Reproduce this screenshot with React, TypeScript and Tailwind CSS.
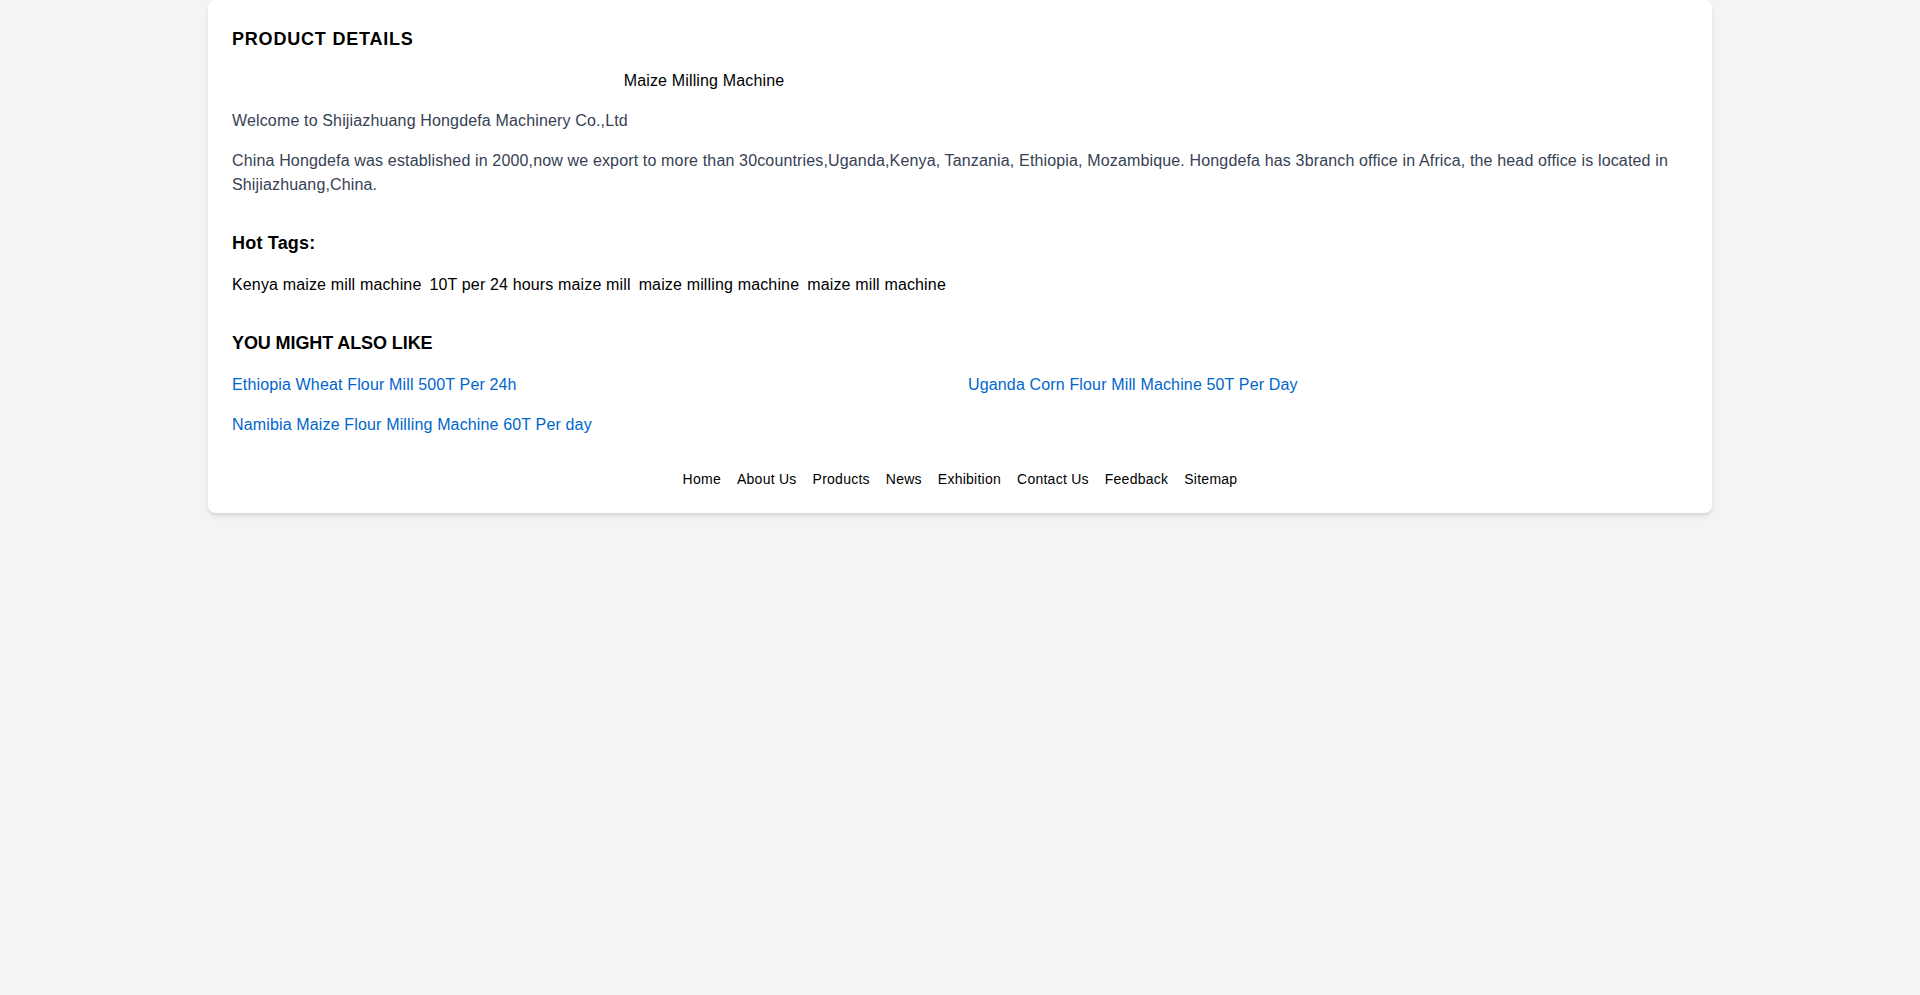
const tags = [
  "Kenya maize mill machine",
  "10T per 24 hours maize mill",
  "maize milling machine",
  "maize mill machine",
];

const related = [
  "Ethiopia Wheat Flour Mill 500T Per 24h",
  "Uganda Corn Flour Mill Machine 50T Per Day",
  "Namibia Maize Flour Milling Machine 60T Per day",
];

const footerLinks = ["Home", "About Us", "Products", "News", "Exhibition", "Contact Us", "Feedback", "Sitemap"];

export default function App() {
  return (
    <div
      className="min-h-screen bg-gray-100"
      style={{ fontFamily: '"Liberation Sans", Arial, sans-serif' }}
    >
      <div className="mx-auto max-w-screen-2xl px-4">
        <div className="rounded-lg bg-white px-6 pt-[25px] pb-6 shadow-md tracking-[0.15px]">
          <h2 className="mb-4 text-lg font-bold tracking-[0.8px] text-black">PRODUCT DETAILS</h2>
          <p className="mb-4 w-[944px] text-center text-base text-black">Maize Milling Machine</p>
          <p className="mb-4 text-base text-gray-700">Welcome to Shijiazhuang Hongdefa Machinery Co.,Ltd</p>
          <p className="text-base leading-6 text-gray-700">
            China Hongdefa was established in 2000,now we export to more than 30countries,Uganda,Kenya, Tanzania,
            Ethiopia, Mozambique. Hongdefa has 3branch office in Africa, the head office is located in
            Shijiazhuang,China.
          </p>

          <h3 className="mt-8 mb-4 text-lg font-bold tracking-[0.2px] text-black">Hot Tags:</h3>
          <div className="flex flex-wrap gap-2 text-base text-black">
            {tags.map((tag) => (
              <a key={tag} href="#">
                {tag}
              </a>
            ))}
          </div>

          <h3 className="mt-8 mb-4 text-lg font-bold tracking-[-0.1px] text-black">YOU MIGHT ALSO LIKE</h3>
          <div className="grid grid-cols-2 gap-4">
            {related.map((item) => (
              <a key={item} href="#" className="text-base text-[#0066cc]">
                {item}
              </a>
            ))}
          </div>

          <div className="mt-8 flex justify-center gap-4 text-sm tracking-[0.25px] text-black">
            {footerLinks.map((link) => (
              <a key={link} href="#">
                {link}
              </a>
            ))}
          </div>
        </div>
      </div>
    </div>
  );
}
